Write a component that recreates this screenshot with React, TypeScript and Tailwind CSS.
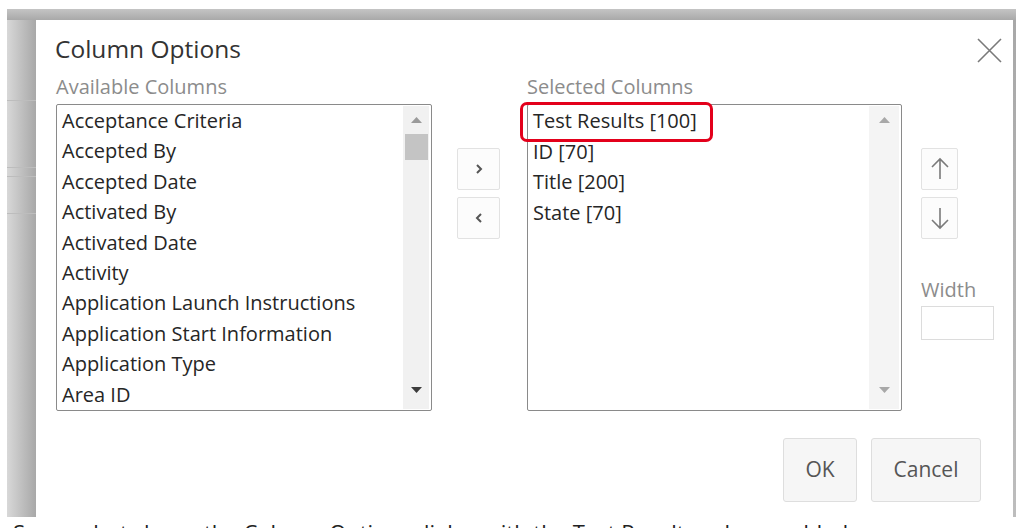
import React from "react";

const available = [
  "Acceptance Criteria",
  "Accepted By",
  "Accepted Date",
  "Activated By",
  "Activated Date",
  "Activity",
  "Application Launch Instructions",
  "Application Start Information",
  "Application Type",
  "Area ID",
];

const selected = ["Test Results [100]", "ID [70]", "Title [200]", "State [70]"];

function TriUp({ color }: { color: string }) {
  return (
    <svg width="11" height="6" viewBox="0 0 11 6">
      <polygon points="0,6 11,6 5.5,0" fill={color} />
    </svg>
  );
}
function TriDown({ color }: { color: string }) {
  return (
    <svg width="11" height="6" viewBox="0 0 11 6">
      <polygon points="0,0 11,0 5.5,6" fill={color} />
    </svg>
  );
}

export default function App() {
  return (
    <div className="w-[1024px] h-[528px] bg-white overflow-hidden font-['Open_Sans','Noto_Sans',sans-serif]">
      <div className="ml-[7px] mt-[9px] w-[1009px] h-[508px] flex flex-col">
        <div className="h-[11px] bg-linear-to-b from-[#c4c4c4] to-[#a9a9a9]" />
        <div className="flex-1 flex">
          <div className="w-[29px] bg-linear-to-r from-[#d8d8d8] to-[#a8a8a8] flex flex-col">
            <div className="h-[80px]" />
            <div className="h-px bg-[#bdbdbd]" />
            <div className="h-[66px]" />
            <div className="h-px bg-[#bdbdbd]" />
            <div className="h-[8px]" />
            <div className="h-px bg-[#bdbdbd]" />
            <div className="h-[36px]" />
            <div className="h-px bg-[#bdbdbd]" />
          </div>
          <div className="flex-1 bg-white relative pl-[20px] pt-[13px]">
            {/* close */}
            <svg
              className="absolute left-[941px] top-[18px]"
              width="25"
              height="25"
              viewBox="0 0 25 25"
            >
              <path d="M1 1 L24 24 M24 1 L1 24" stroke="#7a7a7a" strokeWidth="1.6" />
            </svg>
            <div className="-ml-px text-[24.5px] leading-[32px] text-[#333]">Column Options</div>
            <div className="flex mt-[11px]">
              {/* available */}
              <div className="w-[376px] flex flex-col">
                <div className="text-[20px] leading-[22px] text-[#8c8c8c]">Available Columns</div>
                <div className="mt-[6px] h-[307px] border border-[#8a8a8a] rounded-[2px] flex">
                  <div className="flex-1 pl-[5px] pt-px text-[20px] leading-[30.4px] text-[#262626]">
                    {available.map((a) => (
                      <div key={a} className="whitespace-nowrap">
                        {a}
                      </div>
                    ))}
                  </div>
                  <div className="w-[26px] mr-[2px] my-px bg-[#f1f1f1] flex flex-col items-center">
                    <div className="h-[28px] flex items-center justify-center">
                      <TriUp color="#9a9a9a" />
                    </div>
                    <div className="w-[23px] h-[26px] bg-[#c4c4c4]" />
                    <div className="flex-1" />
                    <div className="h-[22px] flex items-start justify-center">
                      <TriDown color="#3c3c3c" />
                    </div>
                  </div>
                </div>
              </div>
              {/* move buttons */}
              <div className="ml-[25px] w-[43px] mt-[72px] flex flex-col gap-[7px]">
                <div className="h-[42px] border border-[#e2e2e2] rounded-[2px] bg-[#fcfcfc] flex items-center justify-center">
                  <svg width="8" height="12" viewBox="0 0 8 12">
                    <path d="M2 2 L6 6 L2 10" fill="none" stroke="#555" strokeWidth="2" />
                  </svg>
                </div>
                <div className="h-[42px] border border-[#e2e2e2] rounded-[2px] bg-[#fcfcfc] flex items-center justify-center">
                  <svg width="8" height="12" viewBox="0 0 8 12">
                    <path d="M6 2 L2 6 L6 10" fill="none" stroke="#555" strokeWidth="2" />
                  </svg>
                </div>
              </div>
              {/* selected */}
              <div className="ml-[27px] w-[375px] flex flex-col">
                <div className="text-[20px] leading-[22px] text-[#8c8c8c]">Selected Columns</div>
                <div className="relative mt-[6px] h-[307px] border border-[#8a8a8a] rounded-[2px] flex">
                  <div className="flex-1 pl-[5px] pt-px text-[20px] leading-[30.6px] text-[#262626]">
                    {selected.map((a) => (
                      <div key={a} className="whitespace-nowrap">
                        {a}
                      </div>
                    ))}
                  </div>
                  <div className="w-[30px] mr-[2px] my-px bg-[#f4f4f4] flex flex-col items-center">
                    <div className="h-[28px] flex items-center justify-center">
                      <TriUp color="#a8a8a8" />
                    </div>
                    <div className="flex-1" />
                    <div className="h-[22px] flex items-start justify-center">
                      <TriDown color="#a8a8a8" />
                    </div>
                  </div>
                  <div className="absolute -left-[8px] -top-[3px] w-[193px] h-[40px] border-[3px] border-[#e3001b] rounded-[7px]" />
                </div>
              </div>
              {/* order + width */}
              <div className="ml-[19px] mt-[72px] flex flex-col">
                <div className="w-[37px] h-[42px] border border-[#e2e2e2] rounded-[2px] bg-[#fcfcfc] flex items-center justify-center">
                  <svg width="20" height="24" viewBox="0 0 20 24">
                    <path d="M10 2 L10 22 M2 10 L10 2 L18 10" fill="none" stroke="#7a7a7a" strokeWidth="1.6" />
                  </svg>
                </div>
                <div className="mt-[7px] w-[37px] h-[42px] border border-[#e2e2e2] rounded-[2px] bg-[#fcfcfc] flex items-center justify-center">
                  <svg width="20" height="24" viewBox="0 0 20 24">
                    <path d="M10 2 L10 22 M2 14 L10 22 L18 14" fill="none" stroke="#7a7a7a" strokeWidth="1.6" />
                  </svg>
                </div>
                <div className="mt-[40px] text-[20px] leading-[22px] text-[#8c8c8c]">Width</div>
                <div className="mt-[5px] w-[73px] h-[34px] border border-[#dcdcdc]" />
              </div>
            </div>
            <div className="flex justify-end pr-[32px] mt-[27px] gap-[14px]">
              <div className="w-[74px] h-[64px] border border-[#dedede] rounded-[3px] bg-[#f6f6f6] flex items-center justify-center text-[21px] text-[#555]">
                OK
              </div>
              <div className="w-[110px] h-[64px] border border-[#dedede] rounded-[3px] bg-[#f6f6f6] flex items-center justify-center text-[21px] text-[#555]">
                Cancel
              </div>
            </div>
          </div>
          <div className="w-[3px] bg-linear-to-b from-[#a8a8a8] to-[#bdbdbd]" />
        </div>
      </div>
      <div className="h-[11px] overflow-hidden pl-[13px]">
        <div className="mt-[2px] text-[22px] leading-[26px] text-[#222] whitespace-nowrap">
          Screenshot shows the Column Options dialog with the Test Results column added.
        </div>
      </div>
    </div>
  );
}
